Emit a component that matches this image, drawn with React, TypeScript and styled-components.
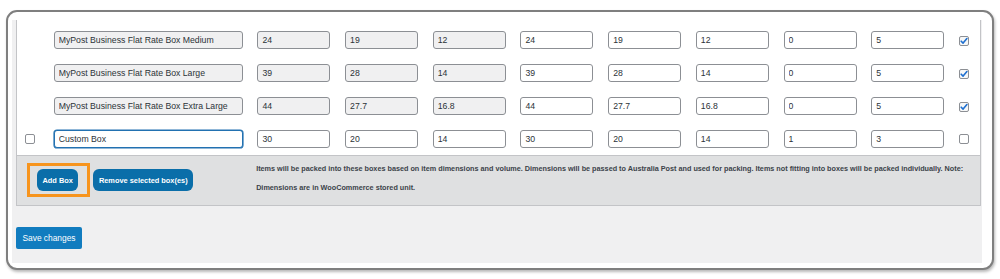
import React from "react";
import styled, { createGlobalStyle } from "styled-components";

const Global = createGlobalStyle`
  html, body { margin: 0; padding: 0; background: #ffffff; }
  body { font-family: "Liberation Sans", Arial, sans-serif; }
  #root { width: 1000px; height: 279px; overflow: hidden; }
`;

const Frame = styled.div`
  margin: 10px 6px 0 6px;
  border: 2px solid #7f7f7f;
  border-radius: 11px;
  background: #ffffff;
  box-shadow: 1px 2px 3px rgba(0, 0, 0, 0.28);
  padding: 8px 10px 5px 4px;
  box-sizing: border-box;
  height: 260px;
  display: flex;
  flex-direction: column;
`;

const Page = styled.div`
  flex: 1;
  background: #f0f0f1;
  padding: 0 1px 0 4px;
  display: flex;
  flex-direction: column;
`;

const Table = styled.div`
  background: #ffffff;
  border: 1px solid #c3c4c7;
  border-top: none;
  padding-top: 3px;
`;

const Row = styled.div`
  display: grid;
  grid-template-columns: 22px 189px repeat(8, 73px) 1fr;
  column-gap: 14.7px;
  align-items: center;
  height: 33px;
`;

const Field = styled.input<{ $readonly?: boolean; $focused?: boolean }>`
  box-sizing: border-box;
  width: 100%;
  height: 18px;
  margin: 0;
  padding: 0 4px;
  font-family: "Liberation Sans", Arial, sans-serif;
  font-size: 8.7px;
  color: #2c3338;
  border-radius: 3px;
  outline: none;
  border: 1px solid ${(p) => (p.$focused ? "#2271b1" : "#8c8f94")};
  box-shadow: ${(p) => (p.$focused ? "0 0 0 0.6px #2271b1" : "none")};
  background: ${(p) => (p.$readonly ? "#f0f0f1" : "#ffffff")};
`;

const Check = styled.span<{ $checked?: boolean; $offset?: number }>`
  display: inline-flex;
  align-items: center;
  justify-content: center;
  box-sizing: border-box;
  width: 10px;
  height: 10px;
  border: 1px solid #8c8f94;
  border-radius: 2px;
  background: ${(p) => (p.$checked ? "#f6f7f7" : "#ffffff")};
  margin-left: ${(p) => p.$offset ?? 0}px;
`;

const Footer = styled.div`
  display: flex;
  align-items: flex-start;
  height: 50px;
  box-sizing: border-box;
  border-top: 1px solid #c3c4c7;
  background: #dfe0e1;
  padding: 7px 0 0 10px;
`;

const Highlight = styled.div`
  border: 3px solid #f7941d;
  padding: 3px 9px 3px 7px;
  display: flex;
`;

const SmallButton = styled.button`
  height: 22px;
  margin: 0;
  border: none;
  border-radius: 6px;
  background: #0a6ea9;
  color: #ffffff;
  font-family: "Liberation Sans", Arial, sans-serif;
  font-weight: bold;
  font-size: 7.4px;
  padding: 0 5.5px;
  white-space: nowrap;
`;

const RemoveWrap = styled.div`
  margin: 6px 0 0 3px;
  display: flex;
`;

const Description = styled.div`
  margin: -4px 0 0 63px;
  font-size: 7.25px;
  font-weight: bold;
  line-height: 19px;
  color: #3c434a;
  white-space: nowrap;
`;

const Line = styled.span`
  display: block;
`;

const SaveButton = styled.button`
  align-self: flex-start;
  margin: 21px 0 0 0;
  height: 22px;
  width: 66px;
  border: none;
  border-radius: 2px;
  background: #117cbf;
  color: #ffffff;
  font-family: "Liberation Sans", Arial, sans-serif;
  font-size: 8.4px;
  padding: 0;
  white-space: nowrap;
`;

const CheckMark = () => (
  <svg width="8" height="8" viewBox="0 0 8 8">
    <path d="M1.2 4.2 L3.1 6.1 L6.9 1.6" fill="none" stroke="#1e6fd0" strokeWidth="1.6" strokeLinecap="round" strokeLinejoin="round" />
  </svg>
);

type BoxRow = {
  name: string;
  values: string[];
  fixed: boolean;
  enabled: boolean;
};

const rows: BoxRow[] = [
  { name: "MyPost Business Flat Rate Box Medium", values: ["24", "19", "12", "24", "19", "12", "0", "5"], fixed: true, enabled: true },
  { name: "MyPost Business Flat Rate Box Large", values: ["39", "28", "14", "39", "28", "14", "0", "5"], fixed: true, enabled: true },
  { name: "MyPost Business Flat Rate Box Extra Large", values: ["44", "27.7", "16.8", "44", "27.7", "16.8", "0", "5"], fixed: true, enabled: true },
  { name: "Custom Box", values: ["30", "20", "14", "30", "20", "14", "1", "3"], fixed: false, enabled: false },
];

export default function App() {
  return (
    <>
      <Global />
      <Frame>
        <Page>
          <Table>
            {rows.map((r, i) => (
              <Row key={i}>
                <div>{!r.fixed && <Check $offset={8} />}</div>
                <Field readOnly defaultValue={r.name} $readonly={r.fixed} $focused={!r.fixed} />
                {r.values.map((v, j) => (
                  <Field key={j} readOnly defaultValue={v} $readonly={r.fixed && j < 3} />
                ))}
                <div>
                  <Check $checked={r.enabled}>{r.enabled && <CheckMark />}</Check>
                </div>
              </Row>
            ))}
            <Footer>
              <Highlight>
                <SmallButton>Add Box</SmallButton>
              </Highlight>
              <RemoveWrap>
                <SmallButton>Remove selected box(es)</SmallButton>
              </RemoveWrap>
              <Description>
                <Line>
                  Items will be packed into these boxes based on item dimensions and volume. Dimensions will be passed to Australia Post and used for packing. Items not fitting into boxes will be packed individually. Note:
                </Line>
                <Line>Dimensions are in WooCommerce stored unit.</Line>
              </Description>
            </Footer>
          </Table>
          <SaveButton>Save changes</SaveButton>
        </Page>
      </Frame>
    </>
  );
}
